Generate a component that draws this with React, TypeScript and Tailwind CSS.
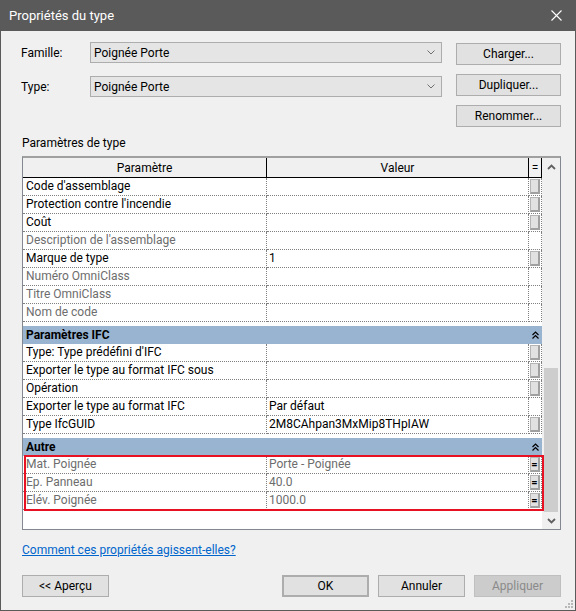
import React from "react";

type Row = {
  p: string;
  v?: string;
  ro?: boolean;
  btn?: boolean;
  eq?: boolean;
};

const identity: Row[] = [
  { p: "Code d'assemblage", btn: true },
  { p: "Protection contre l'incendie", btn: true },
  { p: "Coût", btn: true },
  { p: "Description de l'assemblage", ro: true },
  { p: "Marque de type", v: "1", btn: true },
  { p: "Numéro OmniClass", ro: true },
  { p: "Titre OmniClass", ro: true },
  { p: "Nom de code", ro: true },
];

const ifc: Row[] = [
  { p: "Type: Type prédéfini d'IFC", btn: true },
  { p: "Exporter le type au format IFC sous", btn: true },
  { p: "Opération", btn: true },
  { p: "Exporter le type au format IFC", v: "Par défaut" },
  { p: "Type IfcGUID", v: "2M8CAhpan3MxMip8THpIAW", btn: true },
];

const autre: Row[] = [
  { p: "Mat. Poignée", v: "Porte - Poignée", ro: true, btn: true, eq: true },
  { p: "Ep. Panneau", v: "40.0", ro: true, btn: true, eq: true },
  { p: "Elév. Poignée", v: "1000.0", ro: true, btn: true, eq: true },
];

function Chevron({ className = "" }: { className?: string }) {
  return (
    <svg width="8" height="5" viewBox="0 0 8 5" className={className}>
      <polyline points="0.5,0.5 4,4 7.5,0.5" fill="none" stroke="currentColor" strokeWidth="1" />
    </svg>
  );
}

function Combo({ value }: { value: string }) {
  return (
    <div className="flex h-[21px] w-[352px] items-center justify-between border border-[#adadad] bg-[#e5e5e5] pl-[3px] pr-[6px]">
      <span>{value}</span>
      <Chevron className="text-[#707070]" />
    </div>
  );
}

function Btn({
  children,
  className = "",
}: {
  children: React.ReactNode;
  className?: string;
}) {
  return (
    <div
      className={`flex h-[22px] items-center justify-center border border-[#adadad] bg-[#e1e1e1] ${className}`}
    >
      {children}
    </div>
  );
}

function SmallBtn({ eq }: { eq?: boolean }) {
  return (
    <div className="flex h-[15px] w-[10px] items-center justify-center border border-[#b5b5b5] border-b-2 border-r-2 border-b-[#a0a0a0] border-r-[#a0a0a0] bg-[#e1e1e1] text-[11px] font-bold leading-none text-black">
      {eq ? "=" : ""}
    </div>
  );
}

function GridRow({ r }: { r: Row }) {
  const tone = r.ro ? "text-[#6d6d6d]" : "text-black";
  return (
    <div className="flex h-[18px]">
      <div
        className={`w-[244px] shrink-0 truncate border-b border-r border-dotted border-[#808080] pl-[3px] leading-[17px] ${tone}`}
      >
        {r.p}
      </div>
      <div
        className={`w-[262px] shrink-0 truncate border-b border-r border-dotted border-[#808080] pl-[2px] leading-[17px] ${tone}`}
      >
        {r.v ?? ""}
      </div>
      <div className="flex w-[13px] shrink-0 items-center justify-center border-b border-r border-dotted border-[#808080]">
        {r.btn && <SmallBtn eq={r.eq} />}
      </div>
    </div>
  );
}

function Group({ title }: { title: string }) {
  return (
    <div className="mt-[4px] flex h-[18px] w-[519px] items-center justify-between bg-[#99b4d1] pl-[3px] pr-[3px]">
      <span className="font-bold leading-[17px]">{title}</span>
      <svg width="7" height="8" viewBox="0 0 7 8">
        <polyline points="0.5,4 3.5,1 6.5,4" fill="none" stroke="#000" strokeWidth="1.2" />
        <polyline points="0.5,7.5 3.5,4.5 6.5,7.5" fill="none" stroke="#000" strokeWidth="1.2" />
      </svg>
    </div>
  );
}

export default function App() {
  return (
    <div
      className="relative flex h-[611px] w-[576px] flex-col bg-[#f0f0f0] text-[12px] text-black"
      style={{ fontFamily: "Roboto, 'Liberation Sans', sans-serif" }}
    >
      {/* title bar */}
      <div className="flex h-[31px] shrink-0 items-center justify-between bg-[#5a5a5a] pl-[9px] pr-[14px] text-white">
        <span className="text-[13px]">Propriétés du type</span>
        <svg width="11" height="11" viewBox="0 0 11 11">
          <path d="M0.5 0.5 L10.5 10.5 M10.5 0.5 L0.5 10.5" stroke="#fff" strokeWidth="1.1" />
        </svg>
      </div>

      <div className="flex flex-1 flex-col border-x border-b border-[#5a5a5a] pl-[21px] pr-[14px]">
        {/* family / type */}
        <div className="flex">
          <div className="mt-[11px] flex flex-col gap-[13px]">
            <div className="flex items-center">
              <span className="-ml-px w-[69px]">Famille:</span>
              <Combo value="Poignée Porte" />
            </div>
            <div className="flex items-center">
              <span className="-ml-px w-[69px]">Type:</span>
              <Combo value="Poignée Porte" />
            </div>
          </div>
          <div className="ml-auto mt-[12px] flex w-[105px] flex-col gap-[9px]">
            <Btn>Charger...</Btn>
            <Btn>Dupliquer...</Btn>
            <Btn>Renommer...</Btn>
          </div>
        </div>

        <div className="mt-[8px] h-[16px] leading-[16px]">Paramètres de type</div>

        {/* property grid */}
        <div className="relative mt-[5px] flex h-[374px] w-[539px] border border-[#828790] border-t-2 border-t-[#a0a0a0]">
          <div className="flex w-[519px] flex-col bg-white">
            <div className="flex h-[20px] border-b border-black bg-[#f0f0f0]">
              <div className="flex w-[244px] items-center justify-center border-r border-black">Paramètre</div>
              <div className="flex w-[262px] items-center justify-center border-r border-black">Valeur</div>
              <div className="flex w-[13px] items-center justify-center border-r border-black">=</div>
            </div>
            {identity.map((r) => (
              <GridRow key={r.p} r={r} />
            ))}
            <Group title="Paramètres IFC" />
            {ifc.map((r) => (
              <GridRow key={r.p} r={r} />
            ))}
            <Group title="Autre" />
            {autre.map((r) => (
              <GridRow key={r.p} r={r} />
            ))}
          </div>

          {/* scrollbar */}
          <div className="flex w-[18px] flex-col bg-[#f0f0f0]">
            <div className="flex h-[17px] items-center justify-center text-[#606060]">
              <svg width="9" height="6" viewBox="0 0 9 6">
                <polyline points="1,5 4.5,1.5 8,5" fill="none" stroke="currentColor" strokeWidth="1.8" />
              </svg>
            </div>
            <div className="flex flex-1 flex-col justify-end px-[2px]">
              <div className="h-[144px] bg-[#cdcdcd]" />
            </div>
            <div className="flex h-[17px] items-center justify-center text-[#606060]">
              <svg width="9" height="6" viewBox="0 0 9 6">
                <polyline points="1,1 4.5,4.5 8,1" fill="none" stroke="currentColor" strokeWidth="1.8" />
              </svg>
            </div>
          </div>

          {/* highlight */}
          <div className="absolute left-px top-[297px] h-[56px] w-[520px] border-2 border-[#e81123]" />
        </div>

        <div className="mt-[12px] h-[16px] leading-[16px]">
          <span className="text-[#0066cc] underline">Comment ces propriétés agissent-elles?</span>
        </div>

        {/* footer buttons */}
        <div className="mt-[17px] flex">
          <Btn className="w-[87px]">&lt;&lt; Aperçu</Btn>
          <div className="ml-auto flex gap-[9px]">
            <Btn className="w-[87px] border-2 border-[#0078d7]">OK</Btn>
            <Btn className="w-[87px]">Annuler</Btn>
            <div className="flex h-[22px] w-[87px] items-center justify-center border border-[#bfbfbf] bg-[#cccccc] text-[#8a8a8a]">
              Appliquer
            </div>
          </div>
        </div>
      </div>

      {/* size grip */}
      <svg className="absolute bottom-[3px] right-[3px]" width="8" height="8" viewBox="0 0 8 8">
        <rect x="6" y="0" width="2" height="2" fill="#b8b8b8" />
        <rect x="3" y="3" width="2" height="2" fill="#b8b8b8" />
        <rect x="6" y="3" width="2" height="2" fill="#b8b8b8" />
        <rect x="0" y="6" width="2" height="2" fill="#b8b8b8" />
        <rect x="3" y="6" width="2" height="2" fill="#b8b8b8" />
        <rect x="6" y="6" width="2" height="2" fill="#b8b8b8" />
      </svg>
    </div>
  );
}
